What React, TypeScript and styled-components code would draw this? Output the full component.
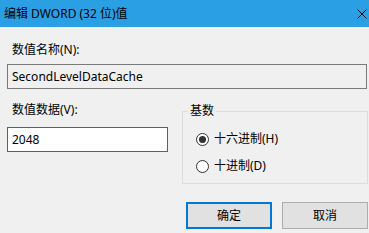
import React from "react";
import styled, { createGlobalStyle } from "styled-components";

const Global = createGlobalStyle`
  html, body { margin: 0; padding: 0; background: #f0f0f0; }
  body { font-family: "Noto Sans", "Noto Sans CJK SC", sans-serif; font-size: 12px; color: #000; }
`;

const Window = styled.div`
  width: 369px;
  height: 233px;
  overflow: hidden;
  background: #f0f0f0;
  display: flex;
  flex-direction: column;
`;

const TitleBar = styled.div`
  height: 27px;
  flex: none;
  background: #2b9fe4;
  display: flex;
  align-items: center;
  justify-content: space-between;
  padding: 0 2px 0 4px;
`;

const Title = styled.span`
  font-size: 12px;
  line-height: 16px;
  color: #000;
`;

const Close = styled.svg`
  width: 10px;
  height: 10px;
  display: block;
`;

const Body = styled.div`
  padding: 15px 0 0 7px;
  display: flex;
  flex-direction: column;
`;

const Label = styled.div`
  line-height: 16px;
  padding-left: 5px;
`;

const Field = styled.div<{ $focused?: boolean; $width: number }>`
  box-sizing: border-box;
  width: ${(p) => p.$width}px;
  height: 25px;
  border: 1px solid ${(p) => (p.$focused ? "#2a7095" : "#7a7a7a")};
  background: ${(p) => (p.$focused ? "#fff" : "#f0f0f0")};
  padding: 0 4px;
  display: flex;
  align-items: center;
  line-height: 16px;
`;

const NameBlock = styled.div`
  display: flex;
  flex-direction: column;
  gap: 6px;
`;

const Row = styled.div`
  display: flex;
  gap: 14px;
  margin-top: 13px;
`;

const DataBlock = styled.div`
  display: flex;
  flex-direction: column;
  gap: 9px;
`;

const Group = styled.fieldset`
  box-sizing: border-box;
  width: 186px;
  height: 81px;
  margin: 1px 0 0 0;
  padding: 0 0 0 13px;
  border: 1px solid #dcdcdc;
  display: flex;
  flex-direction: column;
  gap: 11px;
`;

const Legend = styled.legend`
  padding: 0 2px;
  margin-left: -8px;
  line-height: 16px;
  margin-bottom: 12px;
`;

const RadioRow = styled.div`
  display: flex;
  align-items: center;
  gap: 5px;
  line-height: 16px;
`;

const RadioCircle = styled.span<{ $checked?: boolean }>`
  box-sizing: border-box;
  width: 13px;
  height: 13px;
  border-radius: 50%;
  border: 1px solid #333;
  background: #fff;
  display: flex;
  align-items: center;
  justify-content: center;
  &::after {
    content: "";
    width: 7px;
    height: 7px;
    border-radius: 50%;
    background: ${(p) => (p.$checked ? "#333" : "transparent")};
  }
`;

const Buttons = styled.div`
  display: flex;
  gap: 10px;
  margin: 18px 0 0 179px;
`;

const Button = styled.div<{ $primary?: boolean }>`
  box-sizing: border-box;
  width: 86px;
  height: 27px;
  background: #e1e1e1;
  border: ${(p) => (p.$primary ? "2px solid #0078d7" : "1px solid #adadad")};
  display: flex;
  align-items: center;
  justify-content: center;
  line-height: 16px;
  flex: none;
`;

export default function App() {
  return (
    <Window>
      <Global />
      <TitleBar>
        <Title>编辑 DWORD (32 位)值</Title>
        <Close viewBox="0 0 10 10">
          <path d="M0.5 0.5 L9.5 9.5 M9.5 0.5 L0.5 9.5" stroke="#000" strokeWidth="1" fill="none" />
        </Close>
      </TitleBar>
      <Body>
        <NameBlock>
          <Label>数值名称(N):</Label>
          <Field $width={360}>SecondLevelDataCache</Field>
        </NameBlock>
        <Row>
          <DataBlock>
            <Label>数值数据(V):</Label>
            <Field $width={161} $focused>2048</Field>
          </DataBlock>
          <Group>
            <Legend>基数</Legend>
            <RadioRow>
              <RadioCircle $checked />
              <span>十六进制(H)</span>
            </RadioRow>
            <RadioRow>
              <RadioCircle />
              <span>十进制(D)</span>
            </RadioRow>
          </Group>
        </Row>
        <Buttons>
          <Button $primary>确定</Button>
          <Button>取消</Button>
        </Buttons>
      </Body>
    </Window>
  );
}
